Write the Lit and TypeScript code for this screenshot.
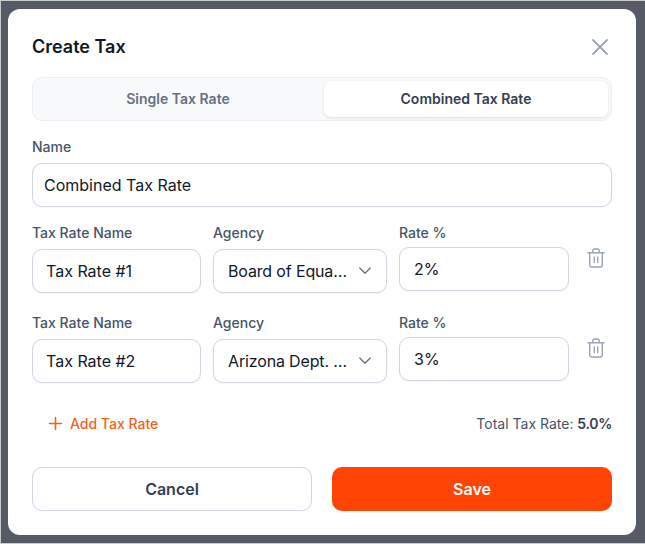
import { LitElement, html, css } from "lit";
import { customElement } from "lit/decorators.js";

const rows = [
  { name: "Tax Rate #1", agency: "Board of Equa…", rate: "2%" },
  { name: "Tax Rate #2", agency: "Arizona Dept. …", rate: "3%" },
];

@customElement("app-root")
export class AppRoot extends LitElement {
  static styles = css`
    :host {
      display: block;
      width: 645px;
      height: 544px;
      box-sizing: border-box;
      border-top: 1px solid #c9cacc;
      border-bottom: 1px solid #c9cacc;
      border-left: 1px solid #c9cacc;
      background: #565a64;
      padding: 8px 9px 8px 7px;
      font-family: Inter, "Liberation Sans", sans-serif;
      color: #111827;
      overflow: hidden;
    }
    .modal {
      box-sizing: border-box;
      height: 526px;
      background: #fff;
      border-radius: 12px;
      padding: 24px;
      display: flex;
      flex-direction: column;
    }
    .head {
      display: flex;
      justify-content: space-between;
      align-items: center;
      height: 28px;
      margin-bottom: 16px;
    }
    h2 {
      margin: 0;
      font-size: 18px;
      line-height: 28px;
      font-weight: 600;
      color: #111827;
    }
    .close {
      display: block;
      width: 24px;
      height: 24px;
      color: #9ca3b4;
    }
    .tabs {
      box-sizing: border-box;
      height: 44px;
      display: grid;
      grid-template-columns: 1fr 1fr;
      column-gap: 4px;
      background: #f8f9fb;
      border: 1px solid #eceef2;
      border-radius: 10px;
      padding: 3px;
      margin-bottom: 16px;
      font-size: 14px;
      line-height: 20px;
      font-weight: 600;
    }
    .tab {
      display: flex;
      align-items: center;
      justify-content: center;
      color: #667085;
      border-radius: 7px;
    }
    .tab.on {
      background: #fff;
      color: #344054;
      box-shadow: 0 1px 3px rgba(16, 24, 40, 0.12);
    }
    .label {
      font-size: 14px;
      line-height: 20px;
      font-weight: 500;
      color: #475467;
      height: 20px;
      margin-bottom: 6px;
    }
    .box {
      box-sizing: border-box;
      height: 44px;
      display: flex;
      align-items: center;
      justify-content: space-between;
      background: #fff;
      border: 1px solid #d0d5e0;
      border-radius: 10px;
      padding: 0 13px;
      font-size: 16px;
      color: #111827;
      box-shadow: 0 1px 2px rgba(16, 24, 40, 0.04);
      white-space: nowrap;
    }
    .name .box {
      padding: 0 11px;
    }
    .name {
      margin-bottom: 16px;
    }
    .row {
      display: grid;
      grid-template-columns: 169px 174px 170px 1fr;
      column-gap: 12px;
      height: 74px;
      margin-bottom: 16px;
    }
    .rate .label {
      margin-bottom: 4px;
    }
    .rate .box {
      padding: 0 14px;
    }
    .box.sel {
      padding: 0 13px 0 14px;
    }
    .box.sel span {
      letter-spacing: -0.15px;
    }
    .chev {
      display: block;
      width: 16px;
      height: 16px;
      color: #667085;
      flex: none;
    }
    .trash {
      display: block;
      width: 20px;
      height: 20px;
      color: #9ca3b8;
      margin: 25px 0 0 5px;
    }
    .foot {
      display: flex;
      justify-content: space-between;
      align-items: center;
      height: 24px;
      margin-top: 8px;
      font-size: 14px;
    }
    .add {
      display: flex;
      align-items: center;
      gap: 7px;
      padding-left: 16px;
      color: #f4611a;
      font-weight: 500;
    }
    .add svg {
      display: block;
      width: 15px;
      height: 15px;
    }
    .total {
      color: #475467;
    }
    .total b {
      font-weight: 600;
      color: #344054;
      letter-spacing: -0.3px;
    }
    .actions {
      display: grid;
      grid-template-columns: 1fr 1fr;
      column-gap: 20px;
      margin-top: 32px;
    }
    .btn {
      box-sizing: border-box;
      height: 44px;
      display: flex;
      align-items: center;
      justify-content: center;
      border-radius: 10px;
      font-size: 16px;
      font-weight: 600;
    }
    .cancel {
      background: #fff;
      border: 1px solid #d0d5e0;
      color: #344054;
    }
    .save {
      background: #ff4405;
      color: #fff;
    }
  `;

  render() {
    return html`
      <div class="modal">
        <div class="head">
          <h2>Create Tax</h2>
          <svg class="close" viewBox="0 0 24 24" fill="none" stroke="currentColor" stroke-width="1.8" stroke-linecap="round">
            <path d="M5 5l14 14M19 5L5 19" />
          </svg>
        </div>
        <div class="tabs">
          <div class="tab">Single Tax Rate</div>
          <div class="tab on">Combined Tax Rate</div>
        </div>
        <div class="name">
          <div class="label">Name</div>
          <div class="box">Combined Tax Rate</div>
        </div>
        ${rows.map(
          (r) => html`
            <div class="row">
              <div>
                <div class="label">Tax Rate Name</div>
                <div class="box">${r.name}</div>
              </div>
              <div>
                <div class="label">Agency</div>
                <div class="box sel">
                  <span>${r.agency}</span>
                  <svg class="chev" viewBox="0 0 16 16" fill="none" stroke="currentColor" stroke-width="1.3" stroke-linecap="round" stroke-linejoin="round">
                    <path d="M2.800 5L8 10.300 13.200 5" />
                  </svg>
                </div>
              </div>
              <div class="rate">
                <div class="label">Rate %</div>
                <div class="box">${r.rate}</div>
              </div>
              <svg class="trash" viewBox="0 0 20 20" fill="none" stroke="currentColor" stroke-width="1.4" stroke-linecap="round" stroke-linejoin="round">
                <path d="M2 4.700h16M3.700 4.700v12.300A2 2 0 0 0 5.700 19h8.600a2 2 0 0 0 2-2V4.700M6.800 4.700V2.800A1.800 1.800 0 0 1 8.600 1h2.800a1.800 1.800 0 0 1 1.800 1.800v1.900M8.300 9v5.500M11.700 9v5.500" />
              </svg>
            </div>
          `
        )}
        <div class="foot">
          <div class="add">
            <svg viewBox="0 0 15 15" fill="none" stroke="currentColor" stroke-width="1.6" stroke-linecap="round">
              <path d="M7.500 1.500v12M1.500 7.500h12" />
            </svg>
            <span>Add Tax Rate</span>
          </div>
          <div class="total">Total Tax Rate: <b>5.0%</b></div>
        </div>
        <div class="actions">
          <div class="btn cancel">Cancel</div>
          <div class="btn save">Save</div>
        </div>
      </div>
    `;
  }
}
